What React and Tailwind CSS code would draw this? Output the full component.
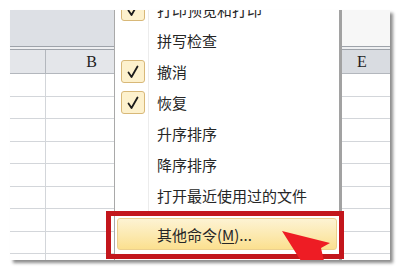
import React from "react";

const menuItems = [
  { label: "打印预览和打印", checked: true },
  { label: "拼写检查", checked: false },
  { label: "撤消", checked: true },
  { label: "恢复", checked: true },
  { label: "升序排序", checked: false },
  { label: "降序排序", checked: false },
  { label: "打开最近使用过的文件", checked: false },
];

function CheckBox() {
  return (
    <div className="ml-[6px] flex h-[23px] w-[24px] items-center justify-center rounded-[3px] border border-[#d8b878] bg-[#fdf1cd]">
      <svg width="14" height="14" viewBox="0 0 14 14">
        <path d="M2.5 7.5 L5.5 12 L11.5 1.5" fill="none" stroke="#1c1c1c" strokeWidth="1.8" strokeLinecap="round" strokeLinejoin="round" />
      </svg>
    </div>
  );
}

function MenuRow({ label, checked }) {
  return (
    <div className="flex h-[31px] items-center">
      <div className="flex h-full w-[34px] shrink-0 items-center border-r border-[#ececec]">
        {checked && <CheckBox />}
      </div>
      <span className="pl-[8px] text-[15px] leading-none text-[#262626]">{label}</span>
    </div>
  );
}

function SheetRow({ tall }) {
  return (
    <div className={`flex border-b border-[#d3d6da] ${tall ? "h-[23px]" : "h-[22px]"}`}>
      <div className="w-[36px] shrink-0 border-r border-[#d3d6da]" />
      <div className="w-[92px] shrink-0 border-r border-[#d3d6da]" />
      <div className="w-[92px] shrink-0 border-r border-[#d3d6da]" />
      <div className="w-[86px] shrink-0 border-r border-[#d3d6da]" />
      <div className="w-[92px] shrink-0" />
    </div>
  );
}

export default function App() {
  return (
    <div className="h-[271px] w-[401px] bg-white pl-[10px] pt-[10px]" style={{ fontFamily: '"Liberation Sans", "Noto Sans CJK SC", sans-serif' }}>
      <div className="relative h-[250px] w-[380px] overflow-hidden bg-white shadow-[3px_3px_3px_rgba(0,0,0,0.45)]">
        {/* ribbon bottom */}
        <div className="flex h-[36px]">
          <div className="w-[200px] bg-[#dde0e5]" />
          <div className="flex-1 bg-[#f7f7f7]" />
        </div>
        <div className="h-[4px] border-y border-[#9ea3aa] bg-[#eeeff1]" />
        {/* column headers (C and D sit under the menu) */}
        <div className="flex h-[24px] border-b border-[#b3b7bd] bg-[#e4e6ea] text-[16px] text-[#1e1e1e]" style={{ fontFamily: '"Liberation Serif", serif' }}>
          <div className="w-[36px] shrink-0 border-r border-[#b3b7bd]" />
          <div className="flex w-[92px] shrink-0 items-center justify-center border-r border-[#b3b7bd]">B</div>
          <div className="w-[92px] shrink-0 border-r border-[#b3b7bd]" />
          <div className="w-[86px] shrink-0 border-r border-[#b3b7bd]" />
          <div className="flex w-[92px] shrink-0 items-center justify-center bg-[#d9dce1]">E</div>
        </div>
        {[0, 1, 2, 3, 4, 5, 6, 7, 8].map((i) => (
          <SheetRow key={i} tall={i % 2 === 0} />
        ))}

        {/* dropdown menu */}
        <div className="absolute bottom-0 left-[104px] top-[-16px] w-[228px] border-l border-r-[3px] border-l-[#a9a9a9] border-r-[#a2a2a2] bg-white" style={{ fontFamily: '"Noto Sans CJK SC", sans-serif' }}>
          {menuItems.map((item) => (
            <MenuRow key={item.label} {...item} />
          ))}
          <div className="px-[2px] pt-[7px]">
            <div className="flex h-[32px] items-center rounded-[3px] border border-[#ecd08e] bg-gradient-to-b from-[#fdf3d3] to-[#fbe08f] pl-[39px] text-[15px] leading-none text-[#262626]">
              其他命令(<span className="underline underline-offset-2">M</span>)...
            </div>
          </div>
        </div>

        {/* red highlight frame */}
        <div className="absolute left-[96px] top-[201px] h-[48px] w-[238px] border-[5px] border-[#c3161c]" />

        {/* red arrow */}
        <svg className="absolute left-0 top-0" width="380" height="250" viewBox="0 0 380 250">
          <polygon points="272,221 320,233 311,238 314,251 291,251" fill="#ee1c24" />
        </svg>
      </div>
    </div>
  );
}
